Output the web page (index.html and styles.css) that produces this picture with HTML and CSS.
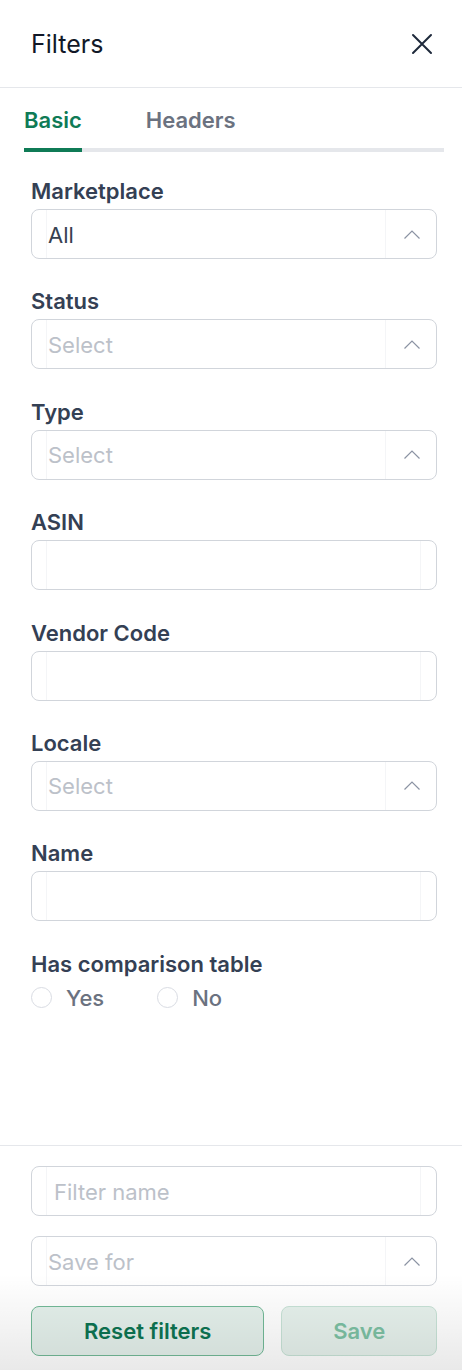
FILE: index.html
```html
<!DOCTYPE html>
<html lang="en">
<head>
<meta charset="utf-8">
<title>Filters</title>
<link rel="stylesheet" href="styles.css">
</head>
<body>
<div class="drawer">
  <header class="hd">
    <h1 class="title">Filters</h1>
    <button class="close" type="button" aria-label="Close">
      <svg width="24" height="24" viewBox="0 0 24 24" fill="none" stroke="#1e293b" stroke-width="2" stroke-linecap="round"><path d="M3 3 L21 21 M21 3 L3 21"/></svg>
    </button>
  </header>

  <nav class="tabs">
    <span class="tab active">Basic</span>
    <span class="tab">Headers</span>
  </nav>

  <div class="body">
    <div class="field">
      <label class="lbl">Marketplace</label>
      <div class="box select"><span class="pre"></span><span class="val">All</span><span class="suf"><svg width="16" height="9" viewBox="0 0 16 9" fill="none" stroke="#8b93a3" stroke-width="1.2"><path d="M0.5 8.5 L8 1 L15.5 8.5"/></svg></span></div>
    </div>
    <div class="field">
      <label class="lbl">Status</label>
      <div class="box select"><span class="pre"></span><span class="val ph">Select</span><span class="suf"><svg width="16" height="9" viewBox="0 0 16 9" fill="none" stroke="#8b93a3" stroke-width="1.2"><path d="M0.5 8.5 L8 1 L15.5 8.5"/></svg></span></div>
    </div>
    <div class="field">
      <label class="lbl">Type</label>
      <div class="box select"><span class="pre"></span><span class="val ph">Select</span><span class="suf"><svg width="16" height="9" viewBox="0 0 16 9" fill="none" stroke="#8b93a3" stroke-width="1.2"><path d="M0.5 8.5 L8 1 L15.5 8.5"/></svg></span></div>
    </div>
    <div class="field">
      <label class="lbl">ASIN</label>
      <div class="box text"><span class="pre"></span><span class="val"></span><span class="suf"></span></div>
    </div>
    <div class="field">
      <label class="lbl">Vendor Code</label>
      <div class="box text"><span class="pre"></span><span class="val"></span><span class="suf"></span></div>
    </div>
    <div class="field">
      <label class="lbl">Locale</label>
      <div class="box select"><span class="pre"></span><span class="val ph">Select</span><span class="suf"><svg width="16" height="9" viewBox="0 0 16 9" fill="none" stroke="#8b93a3" stroke-width="1.2"><path d="M0.5 8.5 L8 1 L15.5 8.5"/></svg></span></div>
    </div>
    <div class="field">
      <label class="lbl">Name</label>
      <div class="box text"><span class="pre"></span><span class="val"></span><span class="suf"></span></div>
    </div>
    <div class="field">
      <label class="lbl">Has comparison table</label>
      <div class="radios">
        <span class="radio"><span class="dot"></span>Yes</span>
        <span class="radio"><span class="dot"></span>No</span>
      </div>
    </div>
  </div>

  <footer class="ft">
    <div class="box text"><span class="pre"></span><span class="val ph pad">Filter name</span><span class="suf"></span></div>
    <div class="box select"><span class="pre"></span><span class="val ph">Save for</span><span class="suf"><svg width="16" height="9" viewBox="0 0 16 9" fill="none" stroke="#8b93a3" stroke-width="1.2"><path d="M0.5 8.5 L8 1 L15.5 8.5"/></svg></span></div>
    <div class="btns">
      <button class="btn reset" type="button">Reset filters</button>
      <button class="btn save" type="button" disabled>Save</button>
    </div>
  </footer>

  <div class="fade"></div>
</div>
</body>
</html>
```

FILE: styles.css
```css
* { box-sizing: border-box; }

html, body {
  margin: 0;
  padding: 0;
  background: #ffffff;
}

body {
  font-family: Inter, "Noto Sans", "Liberation Sans", sans-serif;
  color: #344054;
}

.drawer {
  position: relative;
  width: 462px;
  height: 1370px;
  display: flex;
  flex-direction: column;
  overflow: hidden;
}

.hd {
  height: 88px;
  flex: none;
  display: flex;
  align-items: center;
  justify-content: space-between;
  padding: 0 28px 0 31px;
  border-bottom: 1px solid #e5e7eb;
}

.title {
  margin: 0;
  font-size: 25px;
  font-weight: 400;
  color: #111827;
  line-height: 32px;
}

.close {
  border: 0;
  background: none;
  padding: 0;
  width: 24px;
  height: 24px;
  display: flex;
}

.tabs {
  flex: none;
  display: flex;
  gap: 64px;
  margin: 0 18px 0 24px;
  border-bottom: 4px solid #e5e7eb;
}

.tab {
  padding: 16px 0 12px;
  line-height: 32px;
  font-size: 22px;
  font-weight: 600;
  color: #6b7280;
  margin-bottom: -4px;
  border-bottom: 4px solid transparent;
}

.tab.active {
  color: #0f7b56;
  border-bottom-color: #0f7b56;
}

.body {
  flex: 1;
  padding: 25px 25px 0 31px;
  display: flex;
  flex-direction: column;
  gap: 28.4px;
}

.field {
  display: flex;
  flex-direction: column;
  gap: 4px;
}

.lbl {
  font-size: 22px;
  font-weight: 600;
  line-height: 28px;
  color: #344054;
}

.box {
  height: 50px;
  border: 1px solid #d1d5db;
  border-radius: 8px;
  display: flex;
  align-items: stretch;
  background: #fff;
}

.pre {
  width: 15px;
  flex: none;
  border-right: 1px solid #f4f5f7;
}

.val {
  flex: 1;
  display: flex;
  align-items: center;
  font-size: 22px;
  color: #374151;
  padding-left: 1px;
  padding-top: 1px;
}

.val.ph { color: #bcc1c9; }
.val.pad { padding-left: 7px; }

.suf {
  flex: none;
  display: flex;
  align-items: center;
  justify-content: center;
  border-left: 1px solid #f4f5f7;
}

.select .suf {
  width: 51px;
  padding-left: 1px;
}

.text .suf { width: 16px; }

.radios {
  margin-top: 2px;
  display: flex;
  gap: 53px;
  line-height: 28px;
}

.radio {
  display: flex;
  align-items: center;
  gap: 14px;
  font-size: 22px;
  font-weight: 500;
  color: #6b7280;
}

.dot {
  width: 21px;
  height: 21px;
  border-radius: 50%;
  border: 1px solid #d9dce3;
  background: #fff;
}

.ft {
  flex: none;
  border-top: 1px solid #e5e7eb;
  padding: 20px 25px 14px 31px;
  display: flex;
  flex-direction: column;
  gap: 20px;
}

.btns {
  display: grid;
  grid-template-columns: 3fr 2fr;
  gap: 17px;
}

.btn {
  height: 50px;
  border-radius: 8px;
  font-family: inherit;
  font-size: 22px;
  font-weight: 600;
  padding: 0;
}

.reset {
  background: #e4f0eb;
  border: 1px solid #72b997;
  color: #0d7452;
}

.save {
  background: #e6f1ec;
  border: 1px solid #c7e2d6;
  color: #7cc0a3;
}

.fade {
  position: absolute;
  left: 0;
  right: 0;
  bottom: 0;
  height: 96px;
  background: linear-gradient(to bottom, rgba(0,0,0,0), rgba(0,0,0,0.085));
  pointer-events: none;
}
```
